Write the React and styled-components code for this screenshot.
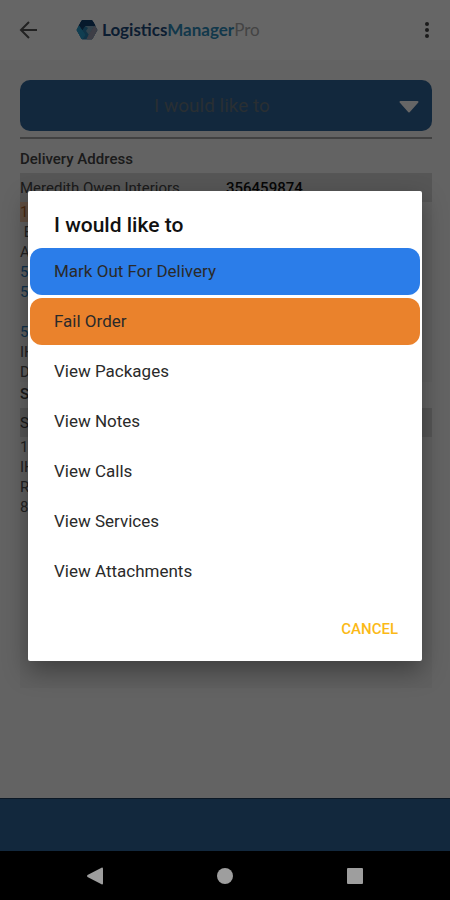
import styled, { createGlobalStyle } from 'styled-components';

const GlobalStyle = createGlobalStyle`
    * {
        box-sizing: border-box;
    }

    body {
        margin: 0;
        font-family: Roboto, sans-serif;
        background: #000;
    }

    button {
        border: none;
        padding: 0;
        background: none;
        font-family: inherit;
        cursor: pointer;
    }
`;

const Phone = styled.div`
    display: flex;
    flex-direction: column;
    min-height: 100vh;
`;

const Screen = styled.div`
    position: relative;
    flex: 1;
    display: flex;
    flex-direction: column;
    background: #f7f7f7;
`;

const Header = styled.header`
    display: flex;
    align-items: center;
    height: 60px;
    padding: 0 16px;
    background: #fff;
`;

const IconButton = styled.button`
    display: flex;

    svg {
        display: block;
    }
`;

const Brand = styled.div`
    flex: 1;
    display: flex;
    align-items: center;
    gap: 4px;
    margin-left: 34px;
    font-family: Lato, sans-serif;
    font-size: 17px;
    line-height: 24px;
`;

const BrandText = styled.span`
    color: ${props => props.$color};
    font-weight: ${props => props.$weight};
`;

const Content = styled.main`
    flex: 1;
    display: flex;
    flex-direction: column;
    padding: 20px 18px 110px 20px;
`;

const Card = styled.section`
    flex: 1;
    background: #f1f1f1;
`;

const SelectWrapper = styled.label`
    display: grid;
    align-items: center;
    background: #f7f7f7;
    border-bottom: 2px solid #a4a4a4;
    padding-bottom: 6px;

    select,
    svg {
        grid-area: 1 / 1;
    }

    select {
        appearance: none;
        width: 100%;
        height: 51px;
        border: none;
        border-radius: 10px;
        padding: 0 40px 0 12px;
        background: #2f6498;
        color: #66757f;
        font-family: inherit;
        font-size: 19px;
        text-align-last: center;
    }

    svg {
        justify-self: end;
        margin: 3px 13px 0 0;
        pointer-events: none;
    }
`;

const SectionTitle = styled.h2`
    margin: 0;
    font-size: 15px;
    line-height: 20px;
    padding: ${props => props.$padding};
    font-weight: 500;
    color: #444;
    background: #f7f7f7;
`;

const Row = styled.div`
    display: grid;
    grid-template-columns: 1fr 1fr;
    height: 29px;
    padding-top: 5px;
    background: #d8d8d8;
    color: #444;
    font-size: 15px;
    line-height: 20px;

    strong {
        font-weight: 500;
        color: #111;
    }
`;

const Line = styled.div`
    height: ${props => props.$height || '20px'};
    color: ${props => props.$color || '#555'};
    font-size: 15px;
    line-height: 20px;
    white-space: pre;
`;

const Tag = styled.span`
    display: inline-block;
    background: #efc4a4;
    color: #b4632a;
`;

const Footer = styled.footer`
    height: 53px;
    background: #2f6498;
    border-top: 1px solid #1c3c5c;
`;

const Overlay = styled.div`
    position: absolute;
    inset: 0;
    display: flex;
    align-items: center;
    justify-content: center;
    padding: 0 28px;
    background: rgba(0, 0, 0, 0.6);
`;

const Dialog = styled.div`
    width: 100%;
    padding: 20px 2px 14px;
    border-radius: 2px;
    background: #fff;
    box-shadow: 0 10px 24px rgba(0, 0, 0, 0.35);
`;

const DialogTitle = styled.h1`
    margin: 0 0 9px;
    padding: 0 24px;
    font-size: 21px;
    line-height: 28px;
    font-weight: 500;
    color: #111;
`;

const Options = styled.div`
    display: flex;
    flex-direction: column;
    gap: 3px;
`;

const Option = styled.button`
    height: 47px;
    padding: 0 24px;
    border-radius: 12px;
    text-align: left;
    font-size: 17px;
    color: #2a2a2a;
    background: ${props => props.$background || 'transparent'};
`;

const DialogActions = styled.div`
    display: flex;
    justify-content: flex-end;
    padding: 16px 22px 0;
`;

const CancelButton = styled.button`
    height: 36px;
    font-size: 15px;
    font-weight: 500;
    color: #fbb917;
`;

const SystemBar = styled.nav`
    display: flex;
    align-items: center;
    justify-content: space-around;
    height: 49px;
    padding: 0 30px;
    background: #000;
`;

const options = [
    { label: 'Mark Out For Delivery', background: '#2b7de9' },
    { label: 'Fail Order', background: '#ea822c' },
    { label: 'View Packages' },
    { label: 'View Notes' },
    { label: 'View Calls' },
    { label: 'View Services' },
    { label: 'View Attachments' },
];

function LogoMark() {
    return (
        <svg width="22" height="22" viewBox="0 0 22 22" strokeWidth="1" strokeLinejoin="round" aria-hidden="true">
            <path d="M6 1.500h10l5 9.500-5 9H6L1 11z" fill="#2a7fae" stroke="#2a7fae" />
            <path d="M6 1.500h10l3 5H9L6 11 3 7z" fill="#123f6e" stroke="#123f6e" />
            <path d="M1 11L3 7 9 16l-3 4z" fill="#2a9ccb" stroke="#2a9ccb" />
            <path d="M9 7h9l-5 9-3-4 2-3z" fill="#7fa6bd" />
            <path d="M18.500 7l2.500 4-5 9h-5L13 16z" fill="#9c9cae" stroke="#9c9cae" />
        </svg>
    );
}

function App() {
    return (
        <Phone>
            <GlobalStyle />
            <Screen>
                <Header>
                    <IconButton aria-label="Back">
                        <svg width="26" height="26" viewBox="0 0 26 26" fill="none" stroke="#555" strokeWidth="2">
                            <path d="M21 13H6M13 5l-8 8 8 8" />
                        </svg>
                    </IconButton>
                    <Brand>
                        <LogoMark />
                        <span>
                            <BrandText $color="#1d4a7c" $weight={700}>Logistics</BrandText>
                            <BrandText $color="#2f8dbb" $weight={700}>Manager</BrandText>
                            <BrandText $color="#aaa" $weight={400}>Pro</BrandText>
                        </span>
                    </Brand>
                    <IconButton aria-label="More options">
                        <svg width="14" height="20" viewBox="0 0 14 20" fill="#444">
                            <circle cx="7" cy="4" r="2" />
                            <circle cx="7" cy="10" r="2" />
                            <circle cx="7" cy="16" r="2" />
                        </svg>
                    </IconButton>
                </Header>
                <Content>
                    <Card>
                        <SelectWrapper>
                            <select aria-label="Action">
                                <option>I would like to</option>
                            </select>
                            <svg width="20" height="12" viewBox="0 0 20 12" fill="#fff">
                                <path d="M1.500 0h17a1 1 0 0 1 .8 1.600l-8 9a1.600 1.600 0 0 1-2.600 0l-8-9A1 1 0 0 1 1.500 0z" />
                            </svg>
                        </SelectWrapper>
                        <SectionTitle $padding="10px 0 4px">Delivery Address</SectionTitle>
                        <Row>
                            <span>Meredith Owen Interiors</span>
                            <strong>356459874</strong>
                        </Row>
                        <Line><Tag>1</Tag></Line>
                        <Line> E</Line>
                        <Line>A</Line>
                        <Line $color="#2b7ec0">5</Line>
                        <Line $color="#2b7ec0" $height="40px">5</Line>
                        <Line $color="#2b7ec0">5</Line>
                        <Line>IH</Line>
                        <Line>D</Line>
                        <SectionTitle $padding="2px 0 4px">S</SectionTitle>
                        <Row><span>S</span></Row>
                        <Line>1</Line>
                        <Line>IH</Line>
                        <Line>R</Line>
                        <Line>8</Line>
                    </Card>
                </Content>
                <Footer />
                <Overlay>
                    <Dialog role="dialog" aria-modal="true" aria-labelledby="dialog-title">
                        <DialogTitle id="dialog-title">I would like to</DialogTitle>
                        <Options>
                            {options.map(option => (
                                <Option key={option.label} $background={option.background}>{option.label}</Option>
                            ))}
                        </Options>
                        <DialogActions>
                            <CancelButton>CANCEL</CancelButton>
                        </DialogActions>
                    </Dialog>
                </Overlay>
            </Screen>
            <SystemBar>
                <IconButton aria-label="System back">
                    <svg width="18" height="18" viewBox="0 0 18 18" fill="#9e9e9e">
                        <path d="M16 0.500q1 0 1 1v15q0 1-1 1L1.500 10q-1-1 0-2z" />
                    </svg>
                </IconButton>
                <IconButton aria-label="System home">
                    <svg width="18" height="18" viewBox="0 0 18 18" fill="#9e9e9e">
                        <circle cx="9" cy="9" r="8" />
                    </svg>
                </IconButton>
                <IconButton aria-label="Recent apps">
                    <svg width="18" height="18" viewBox="0 0 18 18" fill="#9e9e9e">
                        <rect x="1" y="1" width="16" height="16" rx="1" />
                    </svg>
                </IconButton>
            </SystemBar>
        </Phone>
    );
}

export default App;
